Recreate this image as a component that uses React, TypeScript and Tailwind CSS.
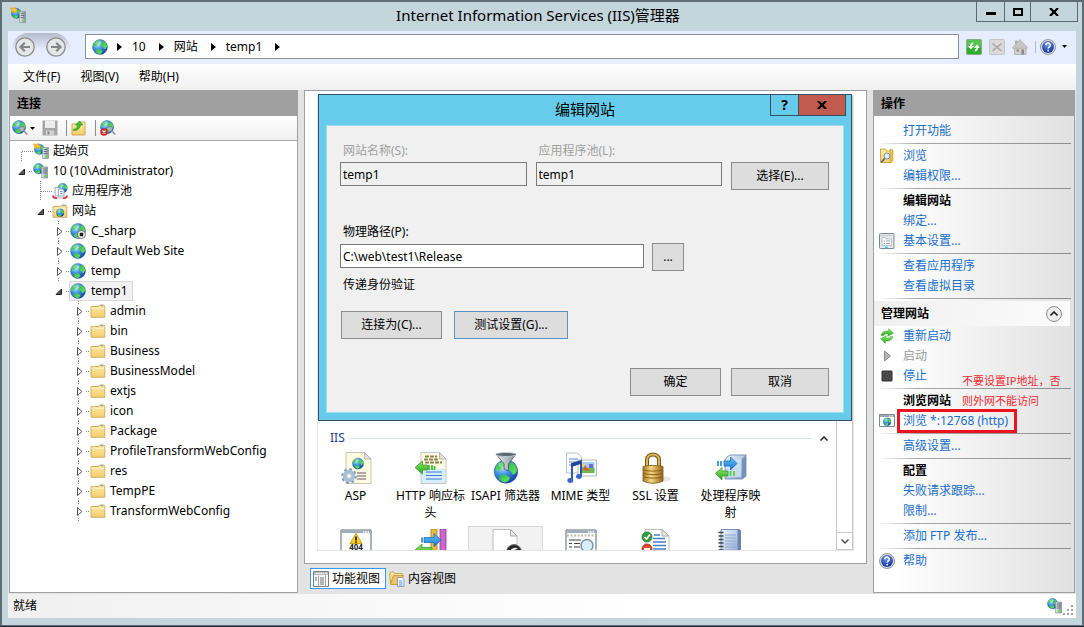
import type { ReactNode } from "react";

const Defs = () => (
  <svg className="absolute size-0" aria-hidden="true">
    <defs>
      <radialGradient id="sea" cx="35%" cy="30%" r="80%">
        <stop offset="0" stopColor="#c4e8fc" />
        <stop offset="0.4" stopColor="#4397ea" />
        <stop offset="1" stopColor="#10359f" />
      </radialGradient>
      <linearGradient id="land" x1="0" y1="0" x2="1" y2="1">
        <stop offset="0" stopColor="#38b060" />
        <stop offset="1" stopColor="#5cf04c" />
      </linearGradient>
      <linearGradient id="folder" x1="0" y1="0" x2="0" y2="1">
        <stop offset="0" stopColor="#fdeaa8" />
        <stop offset="1" stopColor="#f3cf6d" />
      </linearGradient>
      <linearGradient id="metal" x1="0" y1="0" x2="1" y2="0">
        <stop offset="0" stopColor="#e9edf0" />
        <stop offset="1" stopColor="#87929b" />
      </linearGradient>
      <linearGradient id="bluebox" x1="0" y1="0" x2="1" y2="1">
        <stop offset="0" stopColor="#f0f6fd" />
        <stop offset="1" stopColor="#7d9cc9" />
      </linearGradient>
      <linearGradient id="greenArrow" x1="0" y1="0" x2="0" y2="1">
        <stop offset="0" stopColor="#8be86a" />
        <stop offset="1" stopColor="#2ba81f" />
      </linearGradient>
      <linearGradient id="blueArrow" x1="0" y1="0" x2="0" y2="1">
        <stop offset="0" stopColor="#6cc6fb" />
        <stop offset="1" stopColor="#1277cf" />
      </linearGradient>
      <linearGradient id="gold" x1="0" y1="0" x2="1" y2="0">
        <stop offset="0" stopColor="#a87820" />
        <stop offset="0.4" stopColor="#f3d683" />
        <stop offset="1" stopColor="#94651a" />
      </linearGradient>
      <radialGradient id="help" cx="45%" cy="30%" r="70%">
        <stop offset="0" stopColor="#6b96e8" />
        <stop offset="1" stopColor="#10319c" />
      </radialGradient>
    </defs>
  </svg>
);

const Icon = ({
  size = 16,
  children,
}: {
  size?: 16 | 32;
  children: ReactNode;
}) => (
  <svg
    viewBox={`0 0 ${size} ${size}`}
    className={size === 32 ? "size-8 shrink-0" : "size-4 shrink-0"}
    aria-hidden="true"
  >
    {children}
  </svg>
);

const Globe = () => (
  <g>
    <circle cx="8" cy="8" r="7.5" fill="url(#sea)" stroke="#2a5a9c" strokeWidth="0.4" />
    <path
      d="M1.4 6.2C2.2 3.4 4.6 1.3 7.6 1c.6.7-.3 1.3-1 1.8.9.5.7 1.5-.2 2-.9.4-1.3 1.3-2.1 2-.9.6-1.7 1.2-2.5.6z"
      fill="url(#land)"
    />
    <path
      d="M9 3.6c.8-1 2-1.4 3.100-1.400 1.700 1.200 2.700 2.900 2.900 4.800-.2 1.700-1.200 2.700-2.300 3-1-.3-.9-1.500-1.500-2.100-1.200-.3-2.300-.5-2.500-1.600-.1-.9.500-1.200.3-2.700z"
      fill="url(#land)"
    />
    <path
      d="M4.300 10.800c1.100-.9 2.700-1.200 3.900-.3 1 .6 2.400 1.100 2.100 2.200-.5 1.100-1.500 1.900-2.800 2.300-1.800-.2-3.100-1-4-2.200.1-.8.200-1.500.8-2z"
      fill="url(#land)"
    />
    <ellipse cx="6.500" cy="3.800" rx="3.200" ry="1.800" fill="#fff" opacity="0.25" />
  </g>
);

const Tower = () => (
  <g>
    <path d="M9.500 4.500h6v11h-6z" fill="url(#metal)" stroke="#7b868e" strokeWidth="0.6" />
    <path d="M10.500 6.500h4M10.500 8.500h4M10.500 10.500h4" stroke="#5d6870" strokeWidth="0.8" />
    <path d="M12.500 12.500h2v2h-2z" fill="#55e331" />
  </g>
);

const GlobeIcon = () => (
  <Icon>
    <Globe />
  </Icon>
);

const StoppedGlobeIcon = () => (
  <Icon>
    <Globe />
    <circle cx="11.500" cy="11.500" r="4" fill="#fff" stroke="#555" strokeWidth="0.8" />
    <path d="M9.700 9.700h3.600v3.600H9.700z" fill="#222" />
  </Icon>
);

const ServerIcon = () => (
  <Icon>
    <g transform="scale(0.7)">
      <Globe />
    </g>
    <g transform="translate(-1 -0.5)">
      <Tower />
    </g>
  </Icon>
);

const StartIcon = () => (
  <Icon>
    <g transform="translate(1 1) scale(0.68)">
      <Globe />
    </g>
    <Tower />
    <path
      d="M.5 1l3 .2L5.500.5l.3 1.800L8 3.500l-2 .6-.6 2L4 4.600l-2.500.7L2 3.300z"
      fill="#ffc42e"
      stroke="#d98410"
      strokeWidth="0.5"
    />
  </Icon>
);

const FolderShape = () => (
  <g>
    <path
      d="M1 3.500h7.500L9.500 2h4.500l.8 1.500v10.800H1z"
      fill="url(#folder)"
      stroke="#c9a04a"
      strokeWidth="0.8"
    />
    <path d="M10.500 2.800h2.500" stroke="#5d96c9" strokeWidth="1" />
    <path d="M1.500 5.300h12.800" stroke="#fff6d0" strokeWidth="0.8" />
  </g>
);

const FolderIcon = () => (
  <Icon>
    <FolderShape />
  </Icon>
);

const SitesIcon = () => (
  <Icon>
    <FolderShape />
    <g transform="translate(4 5.500) scale(0.52)">
      <Globe />
    </g>
  </Icon>
);

const PoolIcon = () => (
  <Icon>
    <g transform="translate(5.500 0) scale(0.64)">
      <Globe />
    </g>
    <path d="M3 4.500h4L8.500 6v7H3z" fill="#eef4fb" stroke="#8a9bb2" strokeWidth="0.8" />
    <path d="M6.500 6h4L12 7.500V13H6.500z" fill="#f8fbff" stroke="#8a9bb2" strokeWidth="0.8" />
    <path d="M8 8.500h2.500M8 10.500h2.500" stroke="#5d87c5" strokeWidth="0.8" />
    <path d="M1 12.500c0 3.200 4 2.500 4 2.500M15 12.500c0 3.200-4 2.500-4 2.500" fill="none" stroke="#cc3b35" strokeWidth="1.800" />
    <path d="M5 15h6" stroke="#b9c4d0" strokeWidth="1.200" />
  </Icon>
);

const ConnectIcon = ({ broken = false }: { broken?: boolean }) => (
  <Icon>
    <g transform="scale(0.88)">
      <Globe />
    </g>
    <path d="M6 7.500l6-1 .5 3-3 2.500z" fill="#a9b7c2" stroke="#66757f" strokeWidth="0.6" />
    <path d="M11 10.500c2 0 2 3 4.500 3.800" fill="none" stroke="#7f95a2" strokeWidth="1.600" />
    {broken && (
      <g>
        <circle cx="4" cy="12" r="3.700" fill="#cc2222" />
        <path d="M2.500 10.500l3 3M5.500 10.500l-3 3" stroke="#fff" strokeWidth="1.300" />
      </g>
    )}
  </Icon>
);

const SaveIcon = () => (
  <Icon>
    <path d="M.5.5h15v15H.5z" fill="#a6a6a6" />
    <path d="M3 .5h10V8H3z" fill="#ececec" />
    <path d="M4 10.500h8v5H4z" fill="#d2d2d2" />
    <path d="M5.500 11.500h2v3h-2z" fill="#8b8b8b" />
  </Icon>
);

const UpIcon = () => (
  <Icon>
    <path d="M1 4h7l1-2h5v13H1z" fill="url(#folder)" stroke="#c79b3b" strokeWidth="0.8" />
    <path
      d="M2.500 9.500C5 9 6.500 7.500 6.800 5H4.500L8.500 1l3.300 4H9.500C9 8.500 6.500 10.500 2.500 10.500z"
      fill="#3dc12c"
      stroke="#20881a"
      strokeWidth="0.6"
    />
  </Icon>
);

const HelpIcon = () => (
  <Icon>
    <circle cx="8" cy="8" r="7.500" fill="#d5d9de" stroke="#80868c" strokeWidth="0.8" />
    <circle cx="8" cy="8" r="5.900" fill="url(#help)" />
    <path
      d="M5.800 6.300c0-2.900 4.500-2.900 4.500-.2 0 1.700-2.100 1.800-2.100 3.500"
      fill="none"
      stroke="#fff"
      strokeWidth="1.500"
    />
    <circle cx="8.200" cy="11.700" r="0.900" fill="#fff" />
  </Icon>
);

const RefreshIcon = () => (
  <Icon>
    <rect x="0.500" y="0.500" width="15" height="15" rx="1" fill="#2eae2b" stroke="#8ba98a" />
    <path d="M1 1h14v6C10 9 5 8 1 9z" fill="#75d367" opacity="0.600" />
    <path
      d="M7.300 3.500C5 3.500 4 5 4 7H2l3 3.500L8 7H6c0-1 .3-1.500 1.300-1.700zM8.700 12.500C11 12.500 12 11 12 9h2l-3-3.500L8 9h2c0 1-.3 1.500-1.300 1.700z"
      fill="#fff"
    />
  </Icon>
);

const StopLoadIcon = () => (
  <Icon>
    <rect x="0.500" y="0.500" width="15" height="15" rx="1" fill="#dadada" stroke="#c4c4c4" />
    <path d="M3.500 4.500l9 7.500M12.500 4.500l-9 7.500" stroke="#a6a6a6" strokeWidth="1.600" />
  </Icon>
);

const HomeIcon = () => (
  <Icon>
    <path d="M2.500 7.500h11.500v8H2.500z" fill="#d0d0d0" stroke="#a9a9a9" strokeWidth="0.800" />
    <path d="M3 1.500h2.500v4H3z" fill="#b0b0b0" />
    <path d="M.3 8.800L8 .6l7.700 8.200-1 .9-1.700-.4H3l-1.700.4z" fill="#c6c6c6" stroke="#a4a4a4" strokeWidth="0.600" />
    <path d="M9.500 10.500h2.500v5H9.500z" fill="#8a8a8a" />
    <path d="M4.500 10.500h2.500v2H4.500z" fill="#8a8a8a" />
  </Icon>
);

const BrowseFolderIcon = () => (
  <Icon>
    <path d="M1.500 1h5l1 2h4.500v11.500H1.500z" fill="url(#folder)" stroke="#c49b2f" strokeWidth="0.800" />
    <path d="M11 1l3 1v11l-3 2z" fill="#e8c34c" stroke="#c49b2f" strokeWidth="0.600" />
    <path d="M6 10L2.200 14.500" stroke="#5b6671" strokeWidth="1.800" />
    <circle cx="8" cy="8" r="3" fill="#dceefb" stroke="#7f93a3" strokeWidth="1" />
  </Icon>
);

const SettingsIcon = () => (
  <Icon>
    <rect x="0.500" y="0.500" width="14.500" height="15" rx="1" fill="#e6e9ed" stroke="#7c8791" />
    <path d="M1 2.500h14" stroke="#c3cad0" />
    <path d="M3 4.500h3l1 1.500h5.500v6.500H3z" fill="#fff" stroke="#9fadb9" strokeWidth="0.700" />
    <path d="M4.500 8h1.500M7 8h4M4.500 10.500h1.500M7 10.500h4" stroke="#8494a3" strokeWidth="0.900" />
    <path d="M6 14.300h3" stroke="#2ecbe8" strokeWidth="1.300" />
  </Icon>
);

const RestartIcon = () => (
  <Icon>
    <path
      d="M2 7.500C2.500 4 6 2.200 9.300 3.200L9.800.6l4.700 4.700L8.800 8.200l.2-2.300C7.200 5.400 5.500 6 4.800 7.800z"
      fill="url(#greenArrow)"
      stroke="#3a9c30"
      strokeWidth="0.400"
    />
    <path
      d="M14 8.500c-.5 3.500-4 5.300-7.300 4.300l-.5 2.600-4.700-4.700 5.700-2.900-.2 2.300c1.800.5 3.500-.1 4.200-1.900z"
      fill="url(#greenArrow)"
      stroke="#3a9c30"
      strokeWidth="0.400"
    />
  </Icon>
);

const PlayIcon = () => (
  <Icon>
    <path d="M5.500 3l6 5-6 5z" fill="#b5b5b5" stroke="#8e8e8e" />
  </Icon>
);

const StopIcon = () => (
  <Icon>
    <rect x="3" y="3" width="10" height="10" rx="0.500" fill="#4a4a4a" stroke="#2c2c2c" />
  </Icon>
);

const BrowseSiteIcon = () => (
  <Icon>
    <path d="M.5 1.500h15v12H.5z" fill="#fff" stroke="#7d8994" />
    <path d="M1 2h14v2H1z" fill="#9ba7b1" />
    <path d="M10 3h4" stroke="#fff" strokeDasharray="1 0.600" />
    <g transform="translate(4 4.500) scale(0.520)">
      <Globe />
    </g>
  </Icon>
);

const FeaturesTabIcon = () => (
  <Icon>
    <path d="M.5.500h15v15H.5z" fill="#f6f6f6" stroke="#7e7e7e" />
    <path d="M1 1h14v3H1z" fill="#b9bdc1" />
    <path d="M3 2.500h8M12.500 2.500h1.500" stroke="#fff" strokeDasharray="1.500 0.700" />
    <path d="M5.500 4.500v11M12.500 4.500v11" stroke="#a2a2a2" />
    <path d="M7 7h4M7 9h4M7 11h4M7 13h4M2 7h2M2 9h2" stroke="#666" strokeWidth="0.900" />
  </Icon>
);

const ContentTabIcon = () => (
  <Icon>
    <path d="M.8 3l1-2h3l1 1.500h7.500V13H1.500z" fill="url(#folder)" stroke="#b68d35" strokeWidth="0.700" />
    <path d="M1.500 13.500L4.500 4.500h10L11.500 13.500z" fill="#efc462" stroke="#b68d35" strokeWidth="0.700" />
    <path d="M8.500 6.500h4.500l2 2v7H8.500z" fill="#f5f9ff" stroke="#7190bb" strokeWidth="0.800" />
    <path d="M10 10h3.500M10 12h3.500M10 14h3.500" stroke="#4c86d2" strokeWidth="0.900" />
  </Icon>
);

const Page = ({ fill = "#fffbe0" }: { fill?: string }) => (
  <path d="M6 .5h18.500L31 7v24.500H6z" fill={fill} stroke="#b9b9a8" strokeWidth="0.800" />
);

const Fold = () => (
  <path d="M24.500.5V7H31z" fill="#e3e3dc" stroke="#a8a8a0" strokeWidth="0.800" />
);

const AspIcon = () => (
  <Icon size={32}>
    <Page />
    <Fold />
    <g transform="translate(12 5.500) scale(0.750)">
      <Globe />
    </g>
    <path d="M17 21h9M17 24h9M17 27h9" stroke="#9c8a9c" strokeWidth="1.600" />
    <circle cx="9" cy="24" r="6.800" fill="none" stroke="#7d9ab5" strokeWidth="2" strokeDasharray="2.700 2.640" />
    <circle cx="9" cy="24" r="4.500" fill="none" stroke="#a5bfd8" strokeWidth="3.500" />
    <circle cx="9" cy="24" r="2.300" fill="#fffef0" stroke="#7d9ab5" strokeWidth="0.600" />
  </Icon>
);

const HttpIcon = () => (
  <Icon size={32}>
    <path d="M6 16h25v15.500H6z" fill="#d8eefc" />
    <path d="M6 .5h18.500L31 7v10H6z" fill="#fffbe0" />
    <path d="M6 .5h18.500L31 7v24.500H6z" fill="none" stroke="#b4bcbc" strokeWidth="0.800" />
    <Fold />
    <path d="M10 4.500h12M9 7.500h15M10 10.500h17" stroke="#8d8150" strokeWidth="1.900" strokeDasharray="4 1" />
    <path d="M11 20h16M11 23.500h16M11 27h16" stroke="#3b7fd0" strokeWidth="1.200" />
    <path d="M0 15.500L7.500 9v4h5v5h-5v4z" fill="url(#greenArrow)" stroke="#2b961f" strokeWidth="0.700" />
    <path d="M14 13v5M17 13v5M19.500 14v4" stroke="#3cb82b" strokeWidth="1.700" />
  </Icon>
);

const IsapiIcon = () => (
  <Icon size={32}>
    <g transform="translate(3.500 7) scale(1.560)">
      <Globe />
    </g>
    <path d="M6 2h20l-7.500 10v7l-4.500-2v-5z" fill="url(#metal)" stroke="#45525e" strokeWidth="0.800" />
    <ellipse cx="16" cy="2.500" rx="10" ry="2" fill="#59656f" stroke="#c9d4de" strokeWidth="0.800" />
  </Icon>
);

const MimeIcon = () => (
  <Icon size={32}>
    <path d="M1.500 1h11l4 4v16h-15z" fill="#fcfdff" stroke="#a7b1ba" strokeWidth="0.800" />
    <path d="M4 7h9M4 10h9M4 13h7" stroke="#548ec8" strokeWidth="1.200" />
    <path d="M13 8h18.500v16H13z" fill="#fff" stroke="#9aa4ad" strokeWidth="0.800" />
    <path d="M15 10h14.500v11H15z" fill="#a7ccf8" />
    <path d="M15 16c3-3 5 2 8 0s4-1 6.500 0v5H15z" fill="#6bbb4f" />
    <path d="M18 18l2-5 3 4 2 2z" fill="#e15634" />
    <path d="M24 12h4v4h-4z" fill="#6b6be0" />
    <circle cx="18" cy="12.500" r="1.500" fill="#ffd83d" />
    <path d="M7 28V12l9-3v15" fill="none" stroke="#23479f" strokeWidth="1.800" />
    <path d="M7 13.500l9-3" stroke="#23479f" strokeWidth="2.500" />
    <ellipse cx="5.300" cy="28.500" rx="2.900" ry="2.400" fill="#3b65c4" />
    <ellipse cx="14" cy="24.500" rx="2.900" ry="2.400" fill="#3b65c4" />
  </Icon>
);

const SslIcon = () => (
  <Icon size={32}>
    <ellipse cx="22" cy="27" rx="9" ry="3" fill="#d9d9d9" opacity="0.600" />
    <path d="M7 16V8c0-7.500 12-7.500 12 0v8" fill="none" stroke="#7c5514" strokeWidth="4" />
    <path d="M7 16V8c0-7.500 12-7.500 12 0v8" fill="none" stroke="#dcb65a" strokeWidth="2" />
    <path d="M3 14.500c6-1.500 14-1.500 20 0V29c-6 3-14 3-20 0z" fill="url(#gold)" stroke="#7c5514" strokeWidth="0.800" />
    <path d="M3.500 18c6 1.500 13.500 1.500 19 0M3.500 21.500c6 1.500 13.500 1.500 19 0M3.500 25c6 1.500 13.500 1.500 19 0" fill="none" stroke="#8c621a" strokeWidth="1" />
  </Icon>
);

const HandlerIcon = () => (
  <Icon size={32}>
    <path d="M12 5l3-2h16v21l-4 3H10V8z" fill="url(#bluebox)" stroke="#6780a8" strokeWidth="0.800" />
    <path d="M27 7l4-4v21l-4 3z" fill="#7690bb" />
    <path d="M12 7h14v18H12z" fill="#d7e5f6" opacity="0.700" />
    <path d="M22 11.500L15.500 5v4H9v5h6.500v4z" fill="url(#blueArrow)" stroke="#1563ab" strokeWidth="0.700" />
    <path d="M3 9v5M6 9v5" stroke="#268ddd" strokeWidth="1.700" />
    <path d="M.5 21.500L7 15.500v3.500h6v5H7v4z" fill="url(#greenArrow)" stroke="#2b961f" strokeWidth="0.700" />
    <path d="M15.500 19v5M19 19v5" stroke="#55cf3e" strokeWidth="1.700" />
  </Icon>
);

const WindowFrame = () => (
  <g>
    <path d="M1 1h30v31H1z" fill="#fcfcfc" stroke="#5d6a75" />
    <path d="M1.500 1.500h29v2.500h-29z" fill="#a1adb8" />
    <path d="M23 3h6" stroke="#fff" strokeWidth="1.300" strokeDasharray="1.500 0.800" />
  </g>
);

const ErrorPagesIcon = () => (
  <Icon size={32}>
    <WindowFrame />
    <path d="M16 4.500l6 10H10z" fill="#ffd21f" stroke="#c18c00" strokeWidth="0.800" strokeLinejoin="round" />
    <path d="M16 7.500v4" stroke="#222" strokeWidth="1.800" />
    <circle cx="16" cy="13" r="0.900" fill="#222" />
    <text x="16" y="21" textAnchor="middle" fontSize="8" fontWeight="700" fill="#222">
      404
    </text>
  </Icon>
);

const ModulesIcon = () => (
  <Icon size={32}>
    <path d="M16 0h6v32h-6z" fill="#e9bd3f" stroke="#a67e19" strokeWidth="0.800" />
    <path d="M25 0h6v32h-6z" fill="#ce68ce" stroke="#8c378f" strokeWidth="0.800" />
    <path d="M26 11L19 4.500v4H9v5h10v4z" fill="url(#blueArrow)" stroke="#1563ab" strokeWidth="0.700" />
    <path d="M7 8.500v5" stroke="#268ddd" strokeWidth="1.700" />
    <path d="M0 21l7-6v3.500h10v5H7V27z" fill="url(#greenArrow)" stroke="#2b961f" strokeWidth="0.700" />
  </Icon>
);

const DefaultDocIcon = () => (
  <Icon size={32}>
    <path d="M3 .5h18L27 7v25H3z" fill="#fff" stroke="#adadad" strokeWidth="0.800" />
    <path d="M20.500.5V7H27z" fill="#e8e8e8" stroke="#999" strokeWidth="0.800" />
    <circle cx="24" cy="23" r="7.500" fill="#2a2a2a" stroke="#777" />
    <path d="M20 22.500c1-3 5-5 8-3l-4 1.500 2 4-1.500 2-1-4z" fill="#fff" />
  </Icon>
);

const DirBrowseIcon = () => (
  <Icon size={32}>
    <WindowFrame />
    <path d="M2 6.500h28" stroke="#b9bfa8" strokeWidth="2" strokeDasharray="2 1.500" />
    <path d="M4 11h12M4 14.500h3M9 14.500h6M4 18h3M9 18h6M4 21.500h3M9 21.500h6" stroke="#444" strokeWidth="1.200" />
    <circle cx="22" cy="16.500" r="6" fill="#d9eefb" stroke="#7e93a6" strokeWidth="1.500" />
    <path d="M18 21l-3 4" stroke="#555" strokeWidth="2" />
  </Icon>
);

const FilteringIcon = () => (
  <Icon size={32}>
    <path d="M5 .5h17L29 7v25H5z" fill="#fff" stroke="#adadad" strokeWidth="0.800" />
    <path d="M22 .5V7h7z" fill="#e8e8e8" stroke="#999" strokeWidth="0.800" />
    <path d="M14 6h6M13 9.500h12M13 13h13M13 16.500h13M13 20h13M13 23.500h13" stroke="#3f7fc6" strokeWidth="1.400" />
    <circle cx="7" cy="8" r="5" fill="#359d3c" stroke="#257a2c" strokeWidth="0.800" />
    <path d="M4.500 8l2 2 3.500-4.500" fill="none" stroke="#fff" strokeWidth="1.600" />
    <circle cx="7" cy="20" r="5" fill="#e0452e" stroke="#b02a16" strokeWidth="0.800" />
    <path d="M4 20h6" stroke="#fff" strokeWidth="2.200" />
  </Icon>
);

const LogIcon = () => (
  <Icon size={32}>
    <path d="M6 .5h18l1.500 1V32H6z" fill="url(#bluebox)" stroke="#5a72a0" strokeWidth="0.800" />
    <path d="M22.500 1h3v31h-3z" fill="#6b84b4" />
    <path d="M10 6h11M10 9h11M10 12h11M10 15h11M10 18h11M10 21h11" stroke="#86a4cf" strokeWidth="0.900" />
    <path d="M3.500 3.500h5M3.500 7h5M3.500 10.500h5M3.500 14h5M3.500 17.500h5M3.500 21h5" stroke="#3d4654" strokeWidth="1.300" />
  </Icon>
);

const Caret = () => (
  <svg viewBox="0 0 5 8" className="h-2 w-[5px] shrink-0" aria-hidden="true">
    <path d="M0 0l5 4-5 4z" fill="#000" />
  </svg>
);

const DownCaret = () => (
  <svg viewBox="0 0 5 3" className="h-[3px] w-[5px] shrink-0" aria-hidden="true">
    <path d="M0 0h5L2.500 3z" fill="#000" />
  </svg>
);

const NavArrow = ({ label, flip }: { label: string; flip?: boolean }) => (
  <button aria-label={label} className="size-5">
    <svg viewBox="0 0 20 20" className={flip ? "size-5 rotate-180" : "size-5"}>
      <circle cx="10" cy="10" r="9.200" fill="#e4e6ea" stroke="#8b8b8b" strokeWidth="1.300" />
      <path d="M15 10H6M9.800 5.800L5.500 10l4.300 4.200" fill="none" stroke="#858585" strokeWidth="2.200" />
    </svg>
  </button>
);

const TitleBar = () => (
  <header className="flex h-[29px] items-start">
    <div className="w-[98px] pl-2 pt-[5px]">
      <StartIcon />
    </div>
    <h1 className="flex-1 pt-[3px] text-center text-[15px] leading-5">
      Internet Information Services (IIS)管理器
    </h1>
    <div className="mr-1 flex h-5 divide-x divide-[#5f6a70] border border-t-0 border-[#5f6a70]">
      <button aria-label="最小化" className="flex w-[28px] items-center justify-center">
        <span className="mt-1 h-[3px] w-[10px] bg-black" />
      </button>
      <button aria-label="最大化" className="flex w-[26px] items-center justify-center">
        <span className="h-2 w-[10px] border-2 border-black" />
      </button>
      <button aria-label="关闭" className="flex w-[46px] items-center justify-center">
        <svg viewBox="0 0 10 8" className="h-2 w-[10px]">
          <path d="M1 0l8 8M9 0L1 8" stroke="#000" strokeWidth="2.200" />
        </svg>
      </button>
    </div>
  </header>
);

const crumbs = ["10", "网站", "temp1"];

const AddressBar = () => (
  <nav className="flex h-[33px] items-center bg-[#e6edfe] pb-[2px] pr-[9px]">
    <div className="ml-1 flex h-7 w-[58px] items-center justify-between rounded-t-2xl bg-linear-to-b from-[#b3bac8] to-[#e6edfe] to-60% pl-[3px] pr-1">
      <NavArrow label="后退" />
      <NavArrow label="前进" flip />
    </div>
    <div className="ml-[15px] flex h-[25px] flex-1 items-center border border-[#8c8f94] bg-white pl-[6px]">
      <GlobeIcon />
      <ul className="flex items-center">
        {crumbs.map((c) => (
          <li key={c} className="flex items-center">
            <span className="ml-[9px] mr-[10px]">
              <Caret />
            </span>
            <a href="#">{c}</a>
            <span className="w-1" />
          </li>
        ))}
      </ul>
      <span className="ml-[9px]">
        <Caret />
      </span>
    </div>
    <div className="flex items-center pl-[7px]">
      <button aria-label="刷新">
        <RefreshIcon />
      </button>
      <button aria-label="停止加载" className="ml-[7px]" disabled>
        <StopLoadIcon />
      </button>
      <button aria-label="主页" className="ml-[7px]">
        <HomeIcon />
      </button>
      <span className="ml-[7px] h-3 w-px bg-[#b8bcc6]" />
      <button aria-label="联机帮助" className="ml-1 flex items-center gap-[6px]">
        <HelpIcon />
        <DownCaret />
      </button>
    </div>
  </nav>
);

const MenuBar = () => (
  <div className="flex h-[26px] items-center gap-5 bg-linear-to-b from-white to-[#f0f0f0] pl-[15px]">
    {["文件(F)", "视图(V)", "帮助(H)"].map((m) => (
      <button key={m}>{m}</button>
    ))}
  </div>
);

type Node = {
  label: string;
  level: number;
  icon: ReactNode;
  state: "open" | "closed" | "first" | "leaf";
  selected?: boolean;
};

const folders = [
  "admin",
  "bin",
  "Business",
  "BusinessModel",
  "extjs",
  "icon",
  "Package",
  "ProfileTransformWebConfig",
  "res",
  "TempPE",
  "TransformWebConfig",
];

const nodes: Node[] = [
  { label: "起始页", level: 0, icon: <StartIcon />, state: "first" },
  { label: "10 (10\\Administrator)", level: 0, icon: <ServerIcon />, state: "open" },
  { label: "应用程序池", level: 1, icon: <PoolIcon />, state: "leaf" },
  { label: "网站", level: 1, icon: <SitesIcon />, state: "open" },
  { label: "C_sharp", level: 2, icon: <StoppedGlobeIcon />, state: "closed" },
  { label: "Default Web Site", level: 2, icon: <GlobeIcon />, state: "closed" },
  { label: "temp", level: 2, icon: <GlobeIcon />, state: "closed" },
  { label: "temp1", level: 2, icon: <GlobeIcon />, state: "open", selected: true },
  ...folders.map(
    (label): Node => ({ label, level: 3, icon: <FolderIcon />, state: "closed" })
  ),
];

const indents = ["pl-0", "pl-[19px]", "pl-[37px]", "pl-[57px]"];

const guides = {
  first: "M11.500 11v9M12 10.500h11",
  leaf: "M11.500 0v20M12 10.500h11",
  open: "M19 10.500h4",
  closed: "M11.500 0v3M11.500 17v3M19 10.500h4",
};

const TreeRow = ({ node }: { node: Node }) => (
  <li className={`flex h-5 items-center ${indents[node.level]}`}>
    <svg viewBox="0 0 23 20" className="h-5 w-[23px] shrink-0" aria-hidden="true">
      <path d={guides[node.state]} fill="none" stroke="#8a8a8a" strokeDasharray="1 1" />
      {node.state === "open" && <path d="M14.500 8v5.500H9z" fill="#555" stroke="#222" />}
      {node.state === "closed" && (
        <path d="M10.500 6.500l4.500 4-4.500 4z" fill="#fff" stroke="#555" />
      )}
    </svg>
    <span
      className={
        node.selected
          ? "flex h-[18px] items-center gap-[5px] bg-[#f2f2f2] pr-1 outline outline-[#d9d9d9]"
          : node.level === 2
            ? "flex h-5 items-center gap-[5px]"
            : "flex h-5 items-center gap-1"
      }
    >
      {node.icon}
      <span className="whitespace-nowrap">{node.label}</span>
    </span>
  </li>
);

const Connections = () => (
  <aside className="flex w-[289px] flex-col border border-[#a0a0a0] bg-white">
    <h2 className="h-[25px] bg-[#a0a0a0] pl-[7px] font-bold leading-[25px]">连接</h2>
    <div className="flex h-[25px] items-center border-b border-[#a8a8a8] bg-linear-to-b from-white to-[#f0f0f0] pl-[2px]">
      <button aria-label="连接" className="flex items-center gap-[2px]">
        <ConnectIcon />
        <DownCaret />
      </button>
      <button aria-label="保存" className="ml-[7px]" disabled>
        <SaveIcon />
      </button>
      <span className="ml-2 mr-1 h-4 w-px bg-[#8f8f8f]" />
      <button aria-label="向上">
        <UpIcon />
      </button>
      <span className="ml-2 mr-1 h-4 w-px bg-[#8f8f8f]" />
      <button aria-label="断开连接">
        <ConnectIcon broken />
      </button>
    </div>
    <ul className="flex-1 overflow-hidden">
      {nodes.map((n) => (
        <TreeRow key={n.label} node={n} />
      ))}
    </ul>
  </aside>
);

const features = [
  { label: "ASP", icon: <AspIcon /> },
  { label: "HTTP 响应标头", icon: <HttpIcon /> },
  { label: "ISAPI 筛选器", icon: <IsapiIcon /> },
  { label: "MIME 类型", icon: <MimeIcon /> },
  { label: "SSL 设置", icon: <SslIcon /> },
  { label: "处理程序映射", icon: <HandlerIcon /> },
  { label: "", icon: <ErrorPagesIcon /> },
  { label: "", icon: <ModulesIcon /> },
  { label: "", icon: <DefaultDocIcon />, hot: true },
  { label: "", icon: <DirBrowseIcon /> },
  { label: "", icon: <FilteringIcon /> },
  { label: "", icon: <LogIcon /> },
];

const FeatureList = () => (
  <div className="flex h-full overflow-hidden border border-[#e6e6e6]">
    <div className="flex-1 pt-[331px]">
      <div className="flex h-[22px] items-center pl-3 pr-2">
        <span className="text-[#1e3f9b]">IIS</span>
        <span className="ml-[5px] h-px flex-1 bg-[#d5e3f2]" />
        <button aria-label="折叠" className="ml-2 flex size-2 items-center">
          <svg viewBox="0 0 8 5" className="h-[5px] w-2">
            <path d="M0.500 4.500L4 1l3.500 3.500" fill="none" stroke="#222" strokeWidth="1.500" />
          </svg>
        </button>
      </div>
      <ul className="grid grid-cols-[repeat(6,75px)]">
        {features.map((f, i) => (
          <li
            key={i}
            className={
              f.hot
                ? "flex h-[77px] flex-col items-center border border-[#d9d9d9] bg-[#f2f2f2] pt-[2px]"
                : "flex h-[77px] flex-col items-center pt-[3px]"
            }
          >
            {f.icon}
            <span className="max-w-[71px] pt-[3px] text-center leading-[17px]">{f.label}</span>
          </li>
        ))}
      </ul>
    </div>
    <div className="flex w-[17px] flex-col justify-end border border-[#c8c8c8] bg-white">
      <button
        aria-label="向下滚动"
        className="flex h-[17px] items-center justify-center border-t border-[#c8c8c8]"
      >
        <svg viewBox="0 0 8 5" className="h-[5px] w-2">
          <path d="M0.500.5L4 4 7.500.5" fill="none" stroke="#444" strokeWidth="1.300" />
        </svg>
      </button>
    </div>
  </div>
);

const DialogButton = ({
  children,
  className,
}: {
  children: ReactNode;
  className: string;
}) => (
  <button type="button" className={`h-7 border bg-[#dddddd] ${className}`}>
    {children}
  </button>
);

const EditSiteDialog = () => (
  <div
    role="dialog"
    aria-labelledby="dialog-title"
    className="absolute left-[13px] right-[14px] top-[3px] border border-[#35505e] bg-[#67ccec] px-[7px] pb-[7px]"
  >
    <div className="relative flex h-[30px] justify-center pt-1">
      <h2 id="dialog-title" className="text-[15px] leading-5">
        编辑网站
      </h2>
      <div className="absolute -right-[2px] top-0 flex h-[21px] border border-t-0 border-[#35505e]">
        <button aria-label="帮助" className="w-[28px] border-r border-[#35505e] text-sm font-bold leading-5">
          ?
        </button>
        <button aria-label="关闭" className="flex w-[46px] items-center justify-center bg-[#c15a4f]">
          <svg viewBox="0 0 10 8" className="h-2 w-[10px]">
            <path d="M1 0l8 8M9 0L1 8" stroke="#000" strokeWidth="2.200" />
          </svg>
        </button>
      </div>
    </div>
    <form className="border border-[#9fdcf0] bg-[#f0f0f0] pb-4 pl-[13px] pr-[14px] pt-[15px]">
      <div className="flex items-start gap-[9px]">
        <div className="flex flex-1 flex-col">
          <label htmlFor="site" className="pl-[3px] leading-5 text-[#a0a0a0]">
            网站名称(S):
          </label>
          <input
            id="site"
            readOnly
            defaultValue="temp1"
            className="mt-px h-6 w-full border border-[#7a7a7a] bg-[#f0f0f0] px-[2px]"
          />
        </div>
        <div className="flex flex-1 flex-col">
          <label htmlFor="pool" className="pl-[3px] leading-5 text-[#a0a0a0]">
            应用程序池(L):
          </label>
          <input
            id="pool"
            readOnly
            defaultValue="temp1"
            className="mt-px h-6 w-full border border-[#7a7a7a] bg-[#f0f0f0] px-[2px]"
          />
        </div>
        <DialogButton className="mt-[21px] w-[98px] border-[#8c8c8c]">选择(E)...</DialogButton>
      </div>
      <label htmlFor="path" className="mt-8 block pl-[3px] leading-5">
        物理路径(P):
      </label>
      <div className="mt-px flex gap-2 pr-[145px]">
        <input
          id="path"
          defaultValue="C:\web\test1\Release"
          className="mt-px h-6 min-w-0 flex-1 border border-[#7a7a7a] bg-white px-[2px]"
        />
        <DialogButton className="w-8 border-[#8c8c8c]">...</DialogButton>
      </div>
      <p className="mt-1 pl-[3px] leading-5">传递身份验证</p>
      <div className="mt-4 flex gap-3 pl-px">
        <DialogButton className="w-[101px] border-[#8c8c8c]">连接为(C)...</DialogButton>
        <DialogButton className="w-[114px] border-[#5a92c3]">测试设置(G)...</DialogButton>
      </div>
      <div className="mt-[29px] flex justify-end gap-[10px]">
        <DialogButton className="w-[91px] border-[#8c8c8c]">确定</DialogButton>
        <DialogButton className="w-[98px] border-[#8c8c8c]">取消</DialogButton>
      </div>
    </form>
  </div>
);

const Workspace = () => (
  <main className="flex min-w-0 flex-1 flex-col">
    <div className="relative min-h-0 flex-1 border border-[#a0a0a0] bg-white px-3 pb-3 pt-1">
      <FeatureList />
      <EditSiteDialog />
    </div>
    <div className="flex h-[29px] gap-[2px] pl-[6px] pt-1">
      <button className="flex h-[21px] items-center gap-[3px] border border-[#3399ff] bg-white px-[2px] pr-[5px]">
        <FeaturesTabIcon />
        功能视图
      </button>
      <button className="flex h-[21px] items-center gap-[3px] px-px">
        <ContentTabIcon />
        内容视图
      </button>
    </div>
  </main>
);

const Action = ({
  children,
  icon,
  disabled,
}: {
  children: ReactNode;
  icon?: ReactNode;
  disabled?: boolean;
}) => (
  <li className="flex h-5 items-center gap-2">
    <span className="w-4">{icon}</span>
    {disabled ? (
      <span className="text-[#9a9a9a]">{children}</span>
    ) : (
      <a href="#" className="whitespace-nowrap text-[#1a6fcb]">
        {children}
      </a>
    )}
  </li>
);

const Heading = ({ children }: { children: ReactNode }) => (
  <li className="flex h-5 items-center pl-6 font-bold">{children}</li>
);

const Separator = () => (
  <li className="-ml-px mr-[3px] flex h-[5px] items-center" role="separator">
    <span className="h-px flex-1 bg-linear-to-r from-transparent via-[#a8a8a8] via-20% to-[#8e8e8e]" />
  </li>
);

const Actions = () => (
  <aside className="flex w-[202px] flex-col border border-[#a0a0a0] bg-linear-to-r from-white from-10% to-[#e1e1e1]">
    <h2 className="h-[25px] bg-[#a0a0a0] pl-[7px] font-bold leading-[25px]">操作</h2>
    <ul className="pl-[5px] pt-[5px]">
      <Action>打开功能</Action>
      <Separator />
      <Action icon={<BrowseFolderIcon />}>浏览</Action>
      <Action>编辑权限...</Action>
      <Separator />
      <Heading>编辑网站</Heading>
      <Action>绑定...</Action>
      <Action icon={<SettingsIcon />}>基本设置...</Action>
      <Separator />
      <Action>查看应用程序</Action>
      <Action>查看虚拟目录</Action>
      <Separator />
      <li className="-ml-[5px] mr-1 flex h-[25px] items-center justify-between bg-linear-to-r from-[#f0f0f0] to-[#fbfbfb] pl-[7px] pr-2">
        <span className="font-bold">管理网站</span>
        <button
          aria-label="折叠"
          className="flex size-4 items-center justify-center rounded-full border border-[#8c8c8c] bg-[#ececec]"
        >
          <svg viewBox="0 0 8 5" className="h-[5px] w-2">
            <path d="M0.500 4.500L4 1l3.500 3.500" fill="none" stroke="#222" strokeWidth="1.600" />
          </svg>
        </button>
      </li>
      <Action icon={<RestartIcon />}>重新启动</Action>
      <Action icon={<PlayIcon />} disabled>
        启动
      </Action>
      <Action icon={<StopIcon />}>停止</Action>
      <Separator />
      <li className="relative flex h-5 items-center pl-6 font-bold">
        浏览网站
        <p className="absolute -top-5 left-[83px] w-[108px] text-[11px] font-normal leading-5 text-[#ee2b32]">
          不要设置IP地址，否则外网不能访问
        </p>
      </li>
      <li className="relative flex h-5 items-center gap-2">
        <span className="w-4">
          <BrowseSiteIcon />
        </span>
        <a href="#" className="whitespace-nowrap text-[#1a6fcb]">
          浏览 *:12768 (http)
        </a>
        <span className="absolute -top-[2px] left-[18px] h-6 w-[120px] border-3 border-[#ec1320]" />
      </li>
      <Separator />
      <Action>高级设置...</Action>
      <Separator />
      <Heading>配置</Heading>
      <Action>失败请求跟踪...</Action>
      <Action>限制...</Action>
      <Separator />
      <Action>添加 FTP 发布...</Action>
      <Separator />
      <Action icon={<HelpIcon />}>帮助</Action>
    </ul>
  </aside>
);

const StatusBar = () => (
  <footer className="flex h-6 items-center justify-between bg-linear-to-r from-[#f0f0f0] to-white to-60% pl-[5px] pr-[3px]">
    <span>就绪</span>
    <span className="flex items-center">
      <ServerIcon />
      <svg viewBox="0 0 10 10" className="mt-2 size-[10px]" aria-hidden="true">
        <path
          d="M8 0h2v2H8zM4 4h2v2H4zM8 4h2v2H8zM0 8h2v2H0zM4 8h2v2H4zM8 8h2v2H8z"
          fill="#a5a5a5"
        />
      </svg>
    </span>
  </footer>
);

const App = () => {
  return (
    <div className="flex h-screen flex-col bg-[#25252b] pb-px font-['Noto_Sans','Noto_Sans_CJK_SC',sans-serif] text-xs text-black">
      <Defs />
      <div className="flex min-h-0 flex-1 flex-col border-2 border-b border-[#5f6b75] bg-[#c4d6dc]">
        <TitleBar />
        <div className="mx-[6px] mb-[7px] flex min-h-0 flex-1 flex-col bg-[#e3e3e3]">
          <AddressBar />
          <MenuBar />
          <div className="flex min-h-0 flex-1 px-px pb-px">
            <Connections />
            <div className="w-[6px]" />
            <Workspace />
            <div className="w-[6px]" />
            <Actions />
          </div>
          <StatusBar />
        </div>
      </div>
    </div>
  );
};

export default App;
